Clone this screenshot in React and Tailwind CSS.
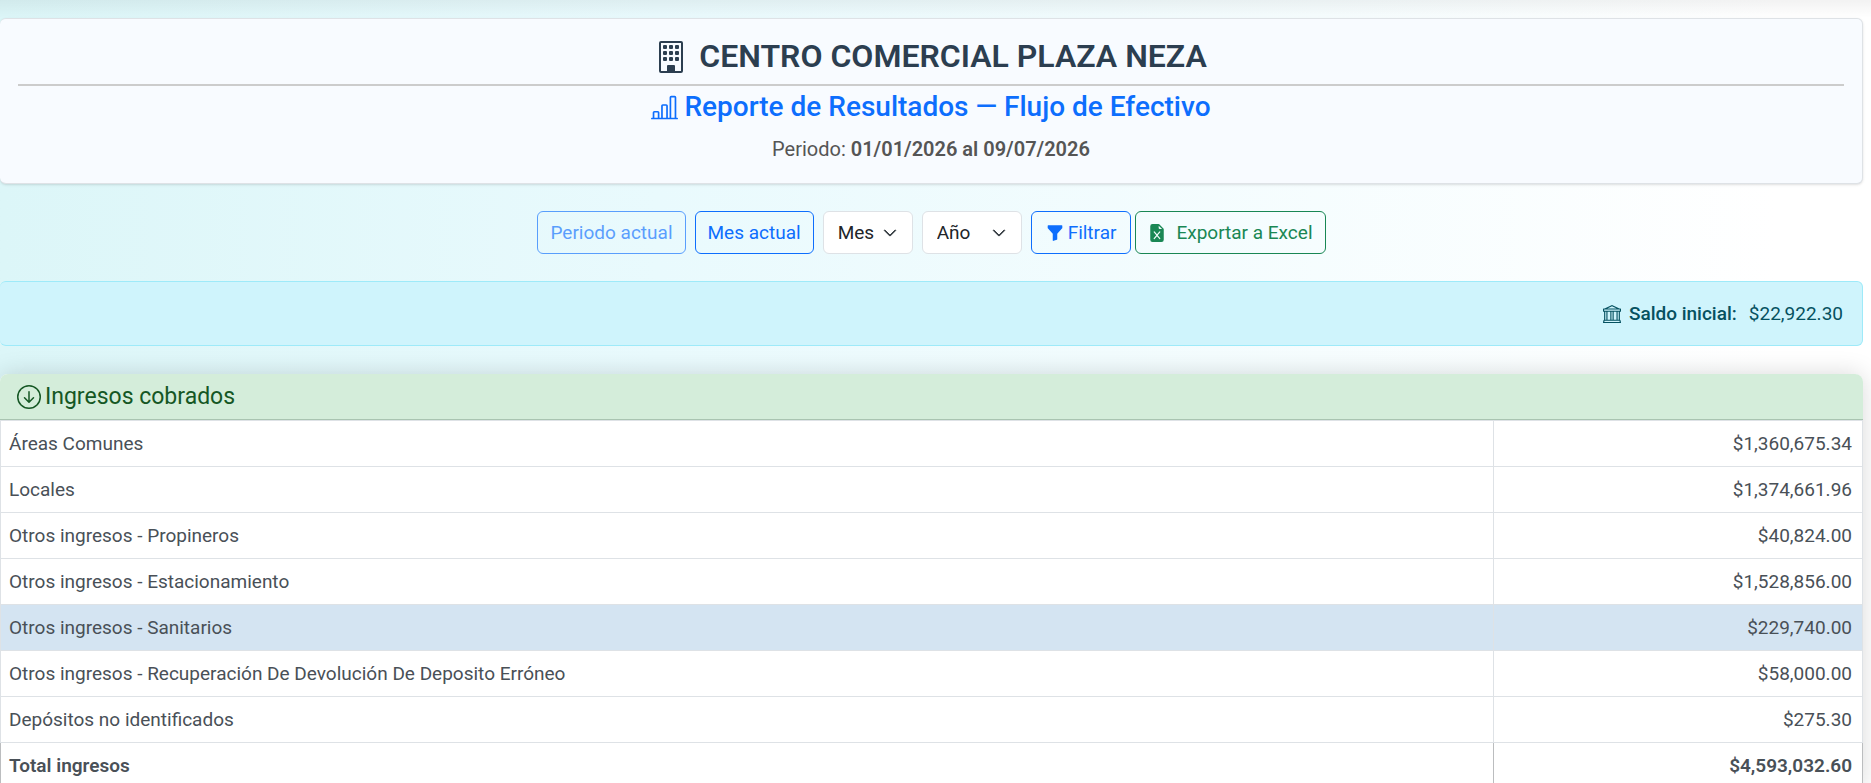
import { useState } from 'react';
import {
  BsArrowDownCircle,
  BsBank,
  BsBarChartLine,
  BsBuilding,
  BsChevronDown,
  BsFileEarmarkExcelFill,
  BsFunnelFill,
} from 'react-icons/bs';

const MESES = [
  'Enero', 'Febrero', 'Marzo', 'Abril', 'Mayo', 'Junio',
  'Julio', 'Agosto', 'Septiembre', 'Octubre', 'Noviembre', 'Diciembre',
];
const ANIOS = [2024, 2025, 2026];

const INGRESOS = [
  { concepto: 'Áreas Comunes', monto: '$1,360,675.34' },
  { concepto: 'Locales', monto: '$1,374,661.96' },
  { concepto: 'Otros ingresos - Propineros', monto: '$40,824.00' },
  { concepto: 'Otros ingresos - Estacionamiento', monto: '$1,528,856.00' },
  { concepto: 'Otros ingresos - Sanitarios', monto: '$229,740.00', activo: true },
  { concepto: 'Otros ingresos - Recuperación De Devolución De Deposito Erróneo', monto: '$58,000.00' },
  { concepto: 'Depósitos no identificados', monto: '$275.30' },
];

const BTN = 'h-[43px] rounded-md border flex items-center';

function Selector({ label, value, onChange, options, className }) {
  return (
    <div className={`relative ${className}`}>
      <select
        aria-label={label}
        value={value}
        onChange={e => onChange(e.target.value)}
        className="h-[43px] w-full appearance-none rounded-md border border-[#dee2e6] bg-white pl-[14px] pr-8 text-[#212529]"
      >
        <option value="">{label}</option>
        {options.map(o => <option key={o} value={o}>{o}</option>)}
      </select>
      <BsChevronDown
        size={14}
        strokeWidth={1}
        className="pointer-events-none absolute right-4 top-[15px] text-[#343a40]"
      />
    </div>
  );
}

export default function App() {
  const [mes, setMes] = useState('');
  const [anio, setAnio] = useState('');

  return (
    <div className="h-screen overflow-hidden bg-linear-to-r from-[#dcf6f8] via-[#e9fafd] via-35% to-white to-95% font-[Roboto,sans-serif] text-[19px] leading-[29px] text-[#495057]">
      <div className="h-[18px] bg-linear-to-b from-black/5 to-transparent" />
      <main className="pr-2">
        {/* Encabezado */}
        <header className="rounded-md border border-l-0 border-[#dee2e6] bg-[#f8fbff] px-[18px] pt-[18px] pb-[18px] text-center shadow-sm">
          <h1 className="flex items-center justify-center gap-3 border-b-2 border-[#cccccc] pb-2 text-[32px] leading-[39px] font-semibold text-[#2c3e50]">
            <BsBuilding size={32} />
            CENTRO COMERCIAL PLAZA NEZA
          </h1>
          <h2 className="mt-[5px] flex items-center justify-center gap-[6px] text-[28px] leading-[32px] font-medium text-[#0d6efd]">
            <BsBarChartLine size={27} />
            Reporte de Resultados — Flujo de Efectivo
          </h2>
          <p className="mt-[10px] text-[20px] leading-[32px] text-[#555555]">
            Periodo: <strong className="font-semibold">01/01/2026 al 09/07/2026</strong>
          </p>
        </header>

        {/* Filtros */}
        <form className="mt-[27px] flex justify-center" onSubmit={e => e.preventDefault()}>
          <button type="button" disabled className={`${BTN} mr-[9px] px-3 border-[#0d6efd] text-[#0d6efd] opacity-65`}>
            Periodo actual
          </button>
          <button type="button" className={`${BTN} mr-[9px] px-3 border-[#0d6efd] text-[#0d6efd]`}>Mes actual</button>
          <Selector label="Mes" value={mes} onChange={setMes} options={MESES} className="mr-[9px] w-[90px]" />
          <Selector label="Año" value={anio} onChange={setAnio} options={ANIOS} className="mr-[9px] w-[100px]" />
          <button type="submit" className={`${BTN} mr-1 gap-1 px-[14px] border-[#0d6efd] text-[#0d6efd]`}>
            <BsFunnelFill size={18} />
            Filtrar
          </button>
          <button type="button" className={`${BTN} gap-[10px] px-3 border-[#198754] text-[#198754]`}>
            <BsFileEarmarkExcelFill size={18} />
            Exportar a Excel
          </button>
        </form>

        {/* Saldo inicial */}
        <div className="mt-[27px] flex h-[65px] items-center justify-end rounded-md border border-l-0 border-[#9eeaf9] bg-[#cff4fc] px-[19px] text-[#055160]">
          <BsBank size={18} className="mr-2" />
          <strong className="mr-3 font-medium">Saldo inicial:</strong>
          <span>$22,922.30</span>
        </div>

        {/* Ingresos */}
        <section className="mt-7 rounded-t-lg bg-white shadow-[0_0_24px_rgba(0,0,0,0.15)]">
          <h3 className="flex h-[46px] items-center gap-1 rounded-t-lg border-b border-[#a9c4b1] bg-[#d4edda] px-[17px] text-[23px] text-[#155724]">
            <BsArrowDownCircle size={24} />
            Ingresos cobrados
          </h3>
          <table className="w-full table-fixed border-collapse">
            <colgroup>
              <col />
              <col className="w-[369px]" />
            </colgroup>
            <tbody>
              {INGRESOS.map(r => (
                <tr key={r.concepto} className={`h-[46px] ${r.activo ? 'bg-[#d4e4f2]' : 'bg-white'}`}>
                  <td className="border border-[#dee2e6] pl-2 pr-[10px]">{r.concepto}</td>
                  <td className="border border-[#dee2e6] pl-2 pr-[10px] text-right">{r.monto}</td>
                </tr>
              ))}
              <tr className="h-[46px] bg-white font-semibold">
                <td className="border border-[#bbbdbf] border-t-[#dee2e6] pl-2 pr-[10px]">Total ingresos</td>
                <td className="border border-[#bbbdbf] border-t-[#dee2e6] pl-2 pr-[10px] text-right">$4,593,032.60</td>
              </tr>
            </tbody>
          </table>
        </section>
      </main>
    </div>
  );
}
